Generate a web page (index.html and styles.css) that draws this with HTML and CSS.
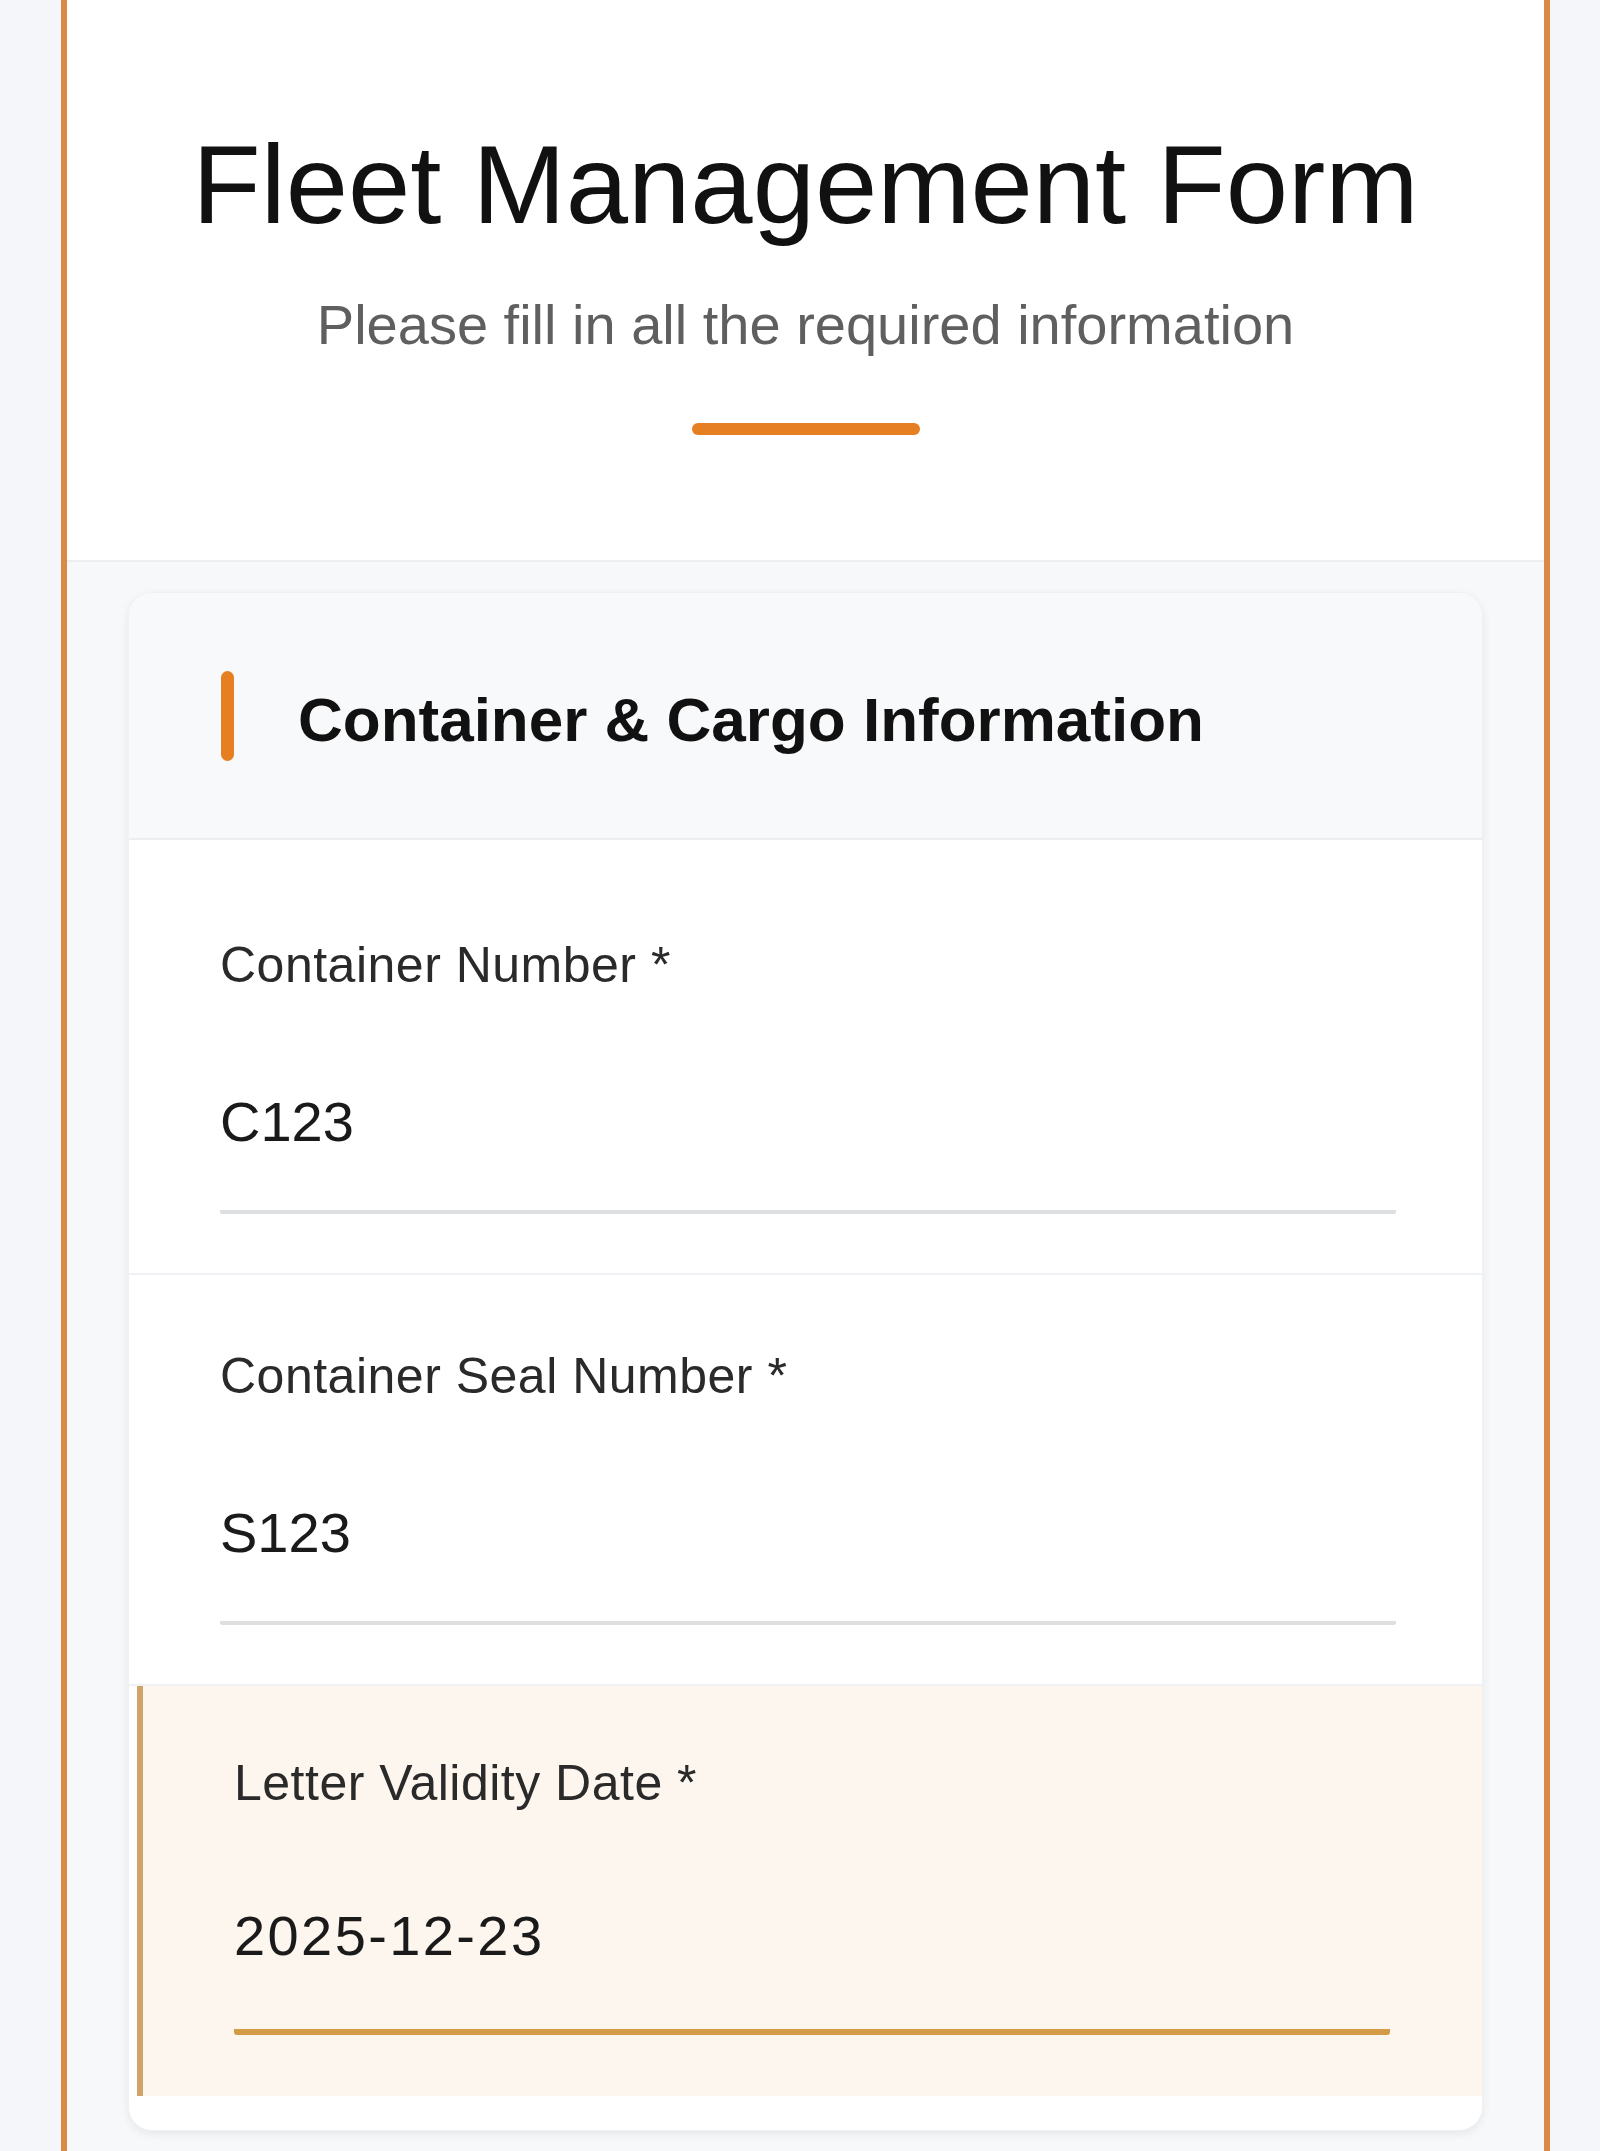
FILE: index.html
```html
<!DOCTYPE html>
<html lang="en">
<head>
<meta charset="utf-8">
<title>Fleet Management Form</title>
<link rel="stylesheet" href="styles.css">
</head>
<body>
<div class="frame">
  <header class="page-header">
    <h1 class="page-title">Fleet Management Form</h1>
    <p class="page-subtitle">Please fill in all the required information</p>
    <div class="title-bar"></div>
  </header>
  <main class="page-body">
    <section class="card">
      <div class="card-header">
        <span class="card-accent"></span>
        <h2 class="card-title">Container &amp; Cargo Information</h2>
      </div>
      <div class="card-body">
        <div class="field">
          <label class="field-label" for="cn">Container Number *</label>
          <input class="field-input" id="cn" type="text" value="C123">
        </div>
        <div class="field">
          <label class="field-label" for="sn">Container Seal Number *</label>
          <input class="field-input" id="sn" type="text" value="S123">
        </div>
        <div class="field field--focus">
          <label class="field-label" for="lv">Letter Validity Date *</label>
          <input class="field-input field-input--date" id="lv" type="text" value="2025-12-23">
        </div>
      </div>
    </section>
  </main>
</div>
</body>
</html>
```

FILE: styles.css
```css
* { box-sizing: border-box; }

html, body {
  margin: 0;
  padding: 0;
}

body {
  background: #f4f6f9;
  font-family: "Liberation Sans", Arial, sans-serif;
  color: #1a1a1a;
  height: 2151px;
  overflow: hidden;
}

.frame {
  margin-left: 61px;
  width: 1489px;
  border-left: 6px solid #db8a45;
  border-right: 6px solid #db8a45;
  background: #f7f8fa;
  min-height: 2151px;
}

.page-header {
  background: #ffffff;
  border-bottom: 2px solid #eceef1;
  padding: 129px 40px 125px;
  display: flex;
  flex-direction: column;
  align-items: center;
}

.page-title {
  margin: 0;
  font-size: 112px;
  line-height: 112px;
  font-weight: 400;
  color: #111111;
  letter-spacing: 0;
}

.page-subtitle {
  margin: 56px 0 0;
  font-size: 56px;
  line-height: 56px;
  color: #5f5f5f;
  letter-spacing: 0;
}

.title-bar {
  margin-top: 70px;
  width: 228px;
  height: 12px;
  border-radius: 6px;
  background: #e67e22;
}

.page-body {
  padding: 30px 61px 0;
}

.card {
  background: #ffffff;
  border-radius: 24px;
  box-shadow: 0 3px 10px rgba(0, 0, 0, 0.07);
  border: 1px solid #eff1f4;
  overflow: hidden;
}

.card-header {
  background: #f8f9fb;
  border-bottom: 2px solid #eceef1;
  min-height: 247px;
  display: flex;
  align-items: center;
  padding-left: 92px;
  gap: 64px;
}

.card-accent {
  width: 13px;
  height: 90px;
  border-radius: 7px;
  background: #e67e22;
  flex: none;
}

.card-title {
  margin: 8px 0 0;
  font-size: 62px;
  line-height: 70px;
  font-weight: 700;
  color: #111111;
  letter-spacing: 0;
}

.card-body {
  padding: 24px 0 34px;
}

.field {
  padding: 72px 86px 59px 91px;
  border-bottom: 2px solid #f0f1f4;
  display: flex;
  flex-direction: column;
}

.field-label {
  font-size: 50px;
  line-height: 58.8px;
  color: #2a2a2a;
  margin-bottom: 39px;
  letter-spacing: 0.5px;
}

.field-input {
  font-family: "Liberation Sans", Arial, sans-serif;
  font-size: 56px;
  line-height: 62px;
  height: 62px;
  box-sizing: content-box;
  padding: 57px 0;
  margin: 0;
  border: none;
  border-bottom: 4px solid #dedfe1;
  border-radius: 2px;
  background: transparent;
  color: #1a1a1a;
  outline: none;
  width: 100%;
}

.field-input--date {
  letter-spacing: 2.4px;
}

.field--focus {
  margin-left: 8px;
  border-left: 6px solid #cfa468;
  border-bottom: none;
  background: #fdf6ee;
  padding-top: 68px;
  padding-right: 92px;
  padding-bottom: 61px;
}

.field--focus .field-input {
  padding-top: 54px;
  padding-bottom: 62px;
  border-bottom: 6px solid #d59a45;
  border-radius: 3px;
}
```
